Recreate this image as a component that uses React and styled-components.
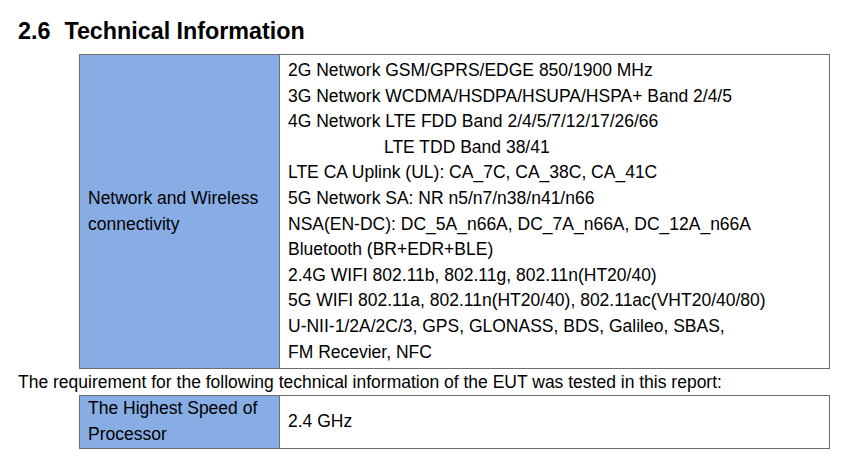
import React from 'react';
import styled, { createGlobalStyle } from 'styled-components';

const GlobalStyle = createGlobalStyle`
  body {
    margin: 0;
    background: #ffffff;
    font-family: "Liberation Sans", Arial, sans-serif;
    color: #000000;
  }
`;

const Page = styled.div`
  width: 857px;
  height: 468px;
  padding: 16px 0 0 18px;
  box-sizing: border-box;
  overflow: hidden;
`;

const Heading = styled.h2`
  margin: 0;
  font-size: 23.3px;
  font-weight: bold;
  line-height: 30px;
  display: flex;
  gap: 14px;
`;

const InfoTable = styled.table`
  margin-left: 61px;
  width: 751px;
  border-collapse: collapse;
  font-size: 17.5px;
  line-height: 25.6px;
  margin-top: ${props => props.$top || 0}px;
`;

const LabelCell = styled.td`
  width: 200px;
  box-sizing: border-box;
  background: #88ace4;
  border: 1px solid #6e6e6e;
  padding: ${props => props.$pad || '3px 8px'};
  vertical-align: middle;
`;

const ValueCell = styled.td`
  border: 1px solid #6e6e6e;
  padding: ${props => props.$pad || '3px 8px'};
  vertical-align: middle;
`;

const Line = styled.div`
  padding-left: ${props => props.$indent || 0}px;
  white-space: nowrap;
`;

const Note = styled.p`
  margin: 0;
  font-size: 17.5px;
  line-height: 26px;
`;

const networkLines = [
  { text: '2G Network GSM/GPRS/EDGE 850/1900 MHz' },
  { text: '3G Network WCDMA/HSDPA/HSUPA/HSPA+ Band 2/4/5' },
  { text: '4G Network LTE FDD Band 2/4/5/7/12/17/26/66' },
  { text: 'LTE TDD Band 38/41', indent: 96 },
  { text: 'LTE CA Uplink (UL): CA_7C, CA_38C, CA_41C' },
  { text: '5G Network SA: NR n5/n7/n38/n41/n66' },
  { text: 'NSA(EN-DC): DC_5A_n66A, DC_7A_n66A, DC_12A_n66A' },
  { text: 'Bluetooth (BR+EDR+BLE)' },
  { text: '2.4G WIFI 802.11b, 802.11g, 802.11n(HT20/40)' },
  { text: '5G WIFI 802.11a, 802.11n(HT20/40), 802.11ac(VHT20/40/80)' },
  { text: 'U-NII-1/2A/2C/3, GPS, GLONASS, BDS, Galileo, SBAS,' },
  { text: 'FM Recevier, NFC' },
];

export default function App() {
  return (
    <>
      <GlobalStyle />
      <Page>
        <Heading>
          <span>2.6</span>
          <span>Technical Information</span>
        </Heading>
        <InfoTable $top={8}>
          <tbody>
            <tr>
              <LabelCell>
                Network and Wireless<br />connectivity
              </LabelCell>
              <ValueCell>
                {networkLines.map((line, i) => (
                  <Line key={i} $indent={line.indent}>{line.text}</Line>
                ))}
              </ValueCell>
            </tr>
          </tbody>
        </InfoTable>
        <Note>The requirement for the following technical information of the EUT was tested in this report:</Note>
        <InfoTable>
          <tbody>
            <tr>
              <LabelCell $pad="0 8px 1px">
                The Highest Speed of<br />Processor
              </LabelCell>
              <ValueCell $pad="0 8px 1px">2.4 GHz</ValueCell>
            </tr>
          </tbody>
        </InfoTable>
      </Page>
    </>
  );
}
